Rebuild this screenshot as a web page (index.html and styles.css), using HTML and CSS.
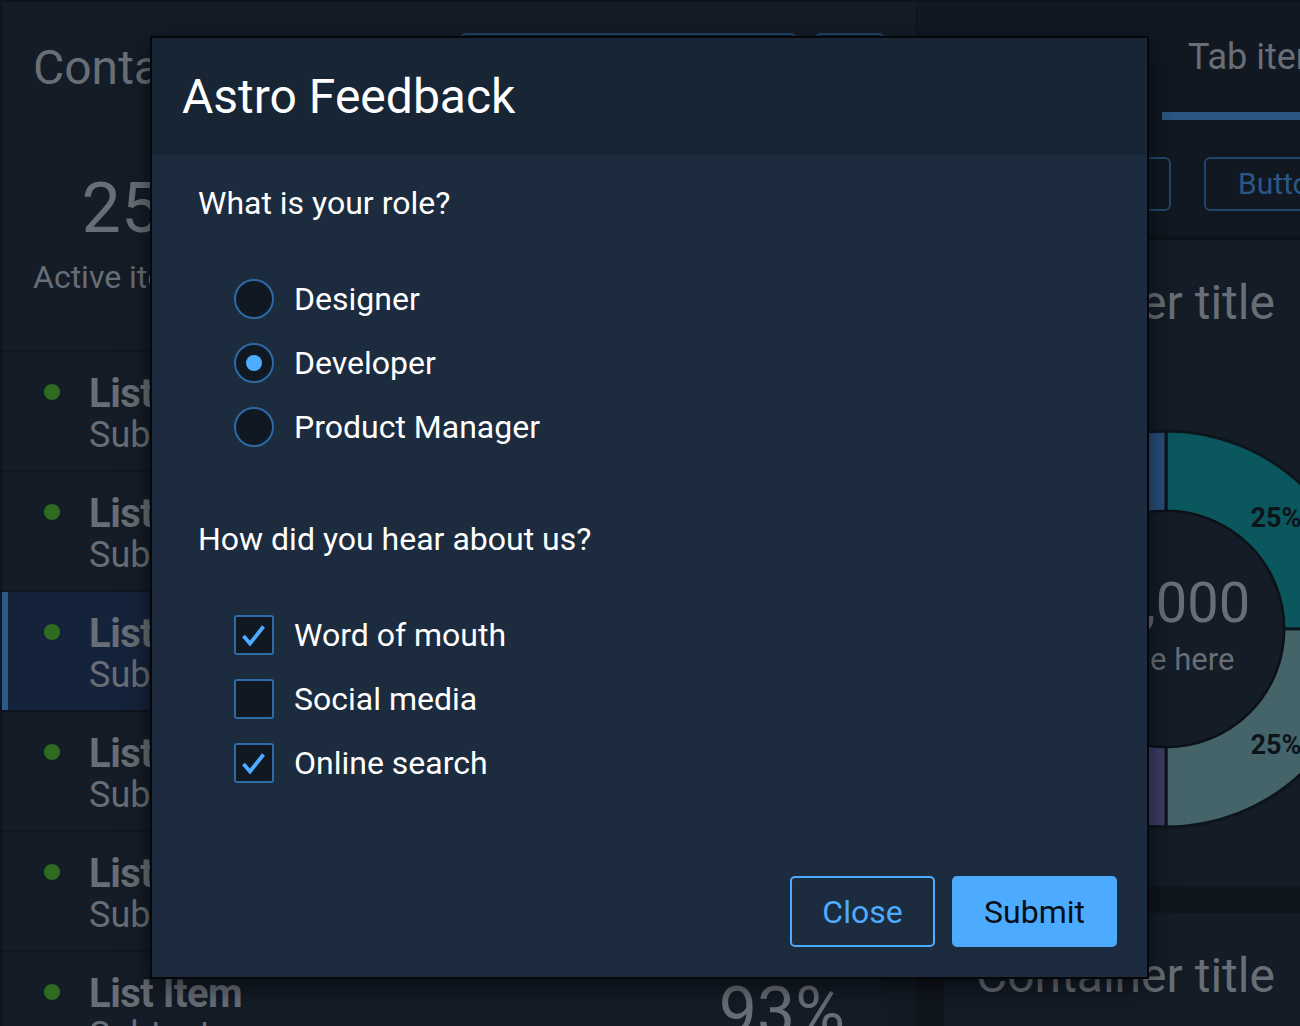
FILE: index.html
```html
<!DOCTYPE html>
<html lang="en">
<head>
<meta charset="utf-8">
<title>Astro Feedback</title>
<link rel="stylesheet" href="styles.css">
</head>
<body>
<div class="app">
  <section class="left">
    <header class="lhead">
      <div class="lhead-top">
        <h2 class="ctitle">Container title</h2>
        <div class="lactions">
          <span class="obtn obtn-wide">Button</span>
          <span class="obtn obtn-small">B</span>
        </div>
      </div>
      <div class="stat">
        <div class="stat-num">25</div>
        <div class="stat-label">Active items</div>
      </div>
    </header>
    <div class="listwrap">
      <ul class="list">
        <li class="item"><span class="dot"></span><div class="itext"><div class="ititle">List Item</div><div class="isub">Subtext</div></div><div class="ival">93%</div></li>
        <li class="item"><span class="dot"></span><div class="itext"><div class="ititle">List Item</div><div class="isub">Subtext</div></div><div class="ival">93%</div></li>
        <li class="item item-selected"><span class="dot"></span><div class="itext"><div class="ititle">List Item</div><div class="isub">Subtext</div></div><div class="ival">93%</div></li>
        <li class="item"><span class="dot"></span><div class="itext"><div class="ititle">List Item</div><div class="isub">Subtext</div></div><div class="ival">93%</div></li>
        <li class="item"><span class="dot"></span><div class="itext"><div class="ititle">List Item</div><div class="isub">Subtext</div></div><div class="ival">93%</div></li>
        <li class="item"><span class="dot"></span><div class="itext"><div class="ititle">List Item</div><div class="isub">Subtext</div></div><div class="ival">93%</div></li>
      </ul>
      <div class="scrolltrack"></div>
    </div>
  </section>

  <section class="right">
    <nav class="tabs">
      <div class="tab">Tab item</div>
      <div class="tab tab-active">Tab item</div>
    </nav>
    <div class="toolbar">
      <span class="obtn tb-first">Button</span>
      <span class="obtn tb-second">Button</span>
    </div>
    <div class="cards">
      <div class="card card-chart">
        <h2 class="ctitle card-title">Container title</h2>
        <svg class="donut" width="420" height="420" viewBox="0 0 420 420">
          <g stroke="#0e141b" stroke-width="3">
            <path d="M210,12 A198,198 0 0 1 408,210 L328,210 A118,118 0 0 0 210,92 Z" fill="#0b575e"/>
            <path d="M408,210 A198,198 0 0 1 210,408 L210,328 A118,118 0 0 0 328,210 Z" fill="#45646a"/>
            <path d="M210,408 A198,198 0 0 1 12,210 L92,210 A118,118 0 0 0 210,328 Z" fill="#3d3e65"/>
            <path d="M12,210 A198,198 0 0 1 210,12 L210,92 A118,118 0 0 0 92,210 Z" fill="#264f79"/>
          </g>
          <circle cx="210" cy="210" r="118" fill="#131c27" stroke="#0c1117" stroke-width="2"/>
          <text class="seg-label" x="320" y="108" text-anchor="middle">25%</text>
          <text class="seg-label" x="320" y="335" text-anchor="middle">25%</text>
          <text class="seg-label" x="100" y="335" text-anchor="middle">25%</text>
          <text class="seg-label" x="100" y="108" text-anchor="middle">25%</text>
          <text class="center-num" x="210" y="203" text-anchor="middle">10,000</text>
          <text class="center-label" x="206" y="251" text-anchor="middle">Value here</text>
        </svg>
      </div>
      <div class="card">
        <h2 class="ctitle card-title">Container title</h2>
      </div>
    </div>
  </section>
</div>

<div class="dialog" role="dialog" aria-labelledby="dlg-title">
  <div class="dlg-head">
    <h1 id="dlg-title" class="dlg-title">Astro Feedback</h1>
  </div>
  <div class="dlg-body">
    <div class="question">What is your role?</div>
    <div class="group">
      <label class="row"><span class="radio"></span><span class="rlabel">Designer</span></label>
      <label class="row"><span class="radio radio-on"></span><span class="rlabel">Developer</span></label>
      <label class="row"><span class="radio"></span><span class="rlabel">Product Manager</span></label>
    </div>
    <div class="question q2">How did you hear about us?</div>
    <div class="group">
      <label class="row"><span class="check check-on"><svg width="40" height="40" viewBox="0 0 40 40"><path d="M9.5 21 L16 28.5 L29.5 11.5" fill="none" stroke="#4dacff" stroke-width="3.8" stroke-linecap="butt" stroke-linejoin="miter"/></svg></span><span class="rlabel">Word of mouth</span></label>
      <label class="row"><span class="check"></span><span class="rlabel">Social media</span></label>
      <label class="row"><span class="check check-on"><svg width="40" height="40" viewBox="0 0 40 40"><path d="M9.5 21 L16 28.5 L29.5 11.5" fill="none" stroke="#4dacff" stroke-width="3.8" stroke-linecap="butt" stroke-linejoin="miter"/></svg></span><span class="rlabel">Online search</span></label>
    </div>
    <div class="dlg-foot">
      <button class="btn btn-secondary">Close</button>
      <button class="btn btn-primary">Submit</button>
    </div>
  </div>
</div>
</body>
</html>
```

FILE: styles.css
```css
html, body {
  margin: 0;
  padding: 0;
  width: 1300px;
  height: 1026px;
  overflow: hidden;
  background: #0e141b;
  font-family: Roboto, "Liberation Sans", sans-serif;
}

.app {
  display: flex;
  align-items: flex-start;
  padding: 2px 0 0 2px;
  width: 1600px;
}

/* ---------- left panel ---------- */
.left {
  width: 914px;
  flex: none;
  background: #141c27;
  display: flex;
  flex-direction: column;
}

.lhead {
  flex: none;
  height: 348px;
  box-sizing: border-box;
  padding: 31px 31px 0 31px;
  display: flex;
  flex-direction: column;
  align-items: flex-start;
}

.lhead-top {
  display: flex;
  align-self: stretch;
  justify-content: space-between;
  align-items: flex-start;
}

.ctitle {
  margin: 0;
  font-weight: 400;
  font-size: 48px;
  line-height: 56px;
  color: #686e76;
}

.lhead-top .ctitle { margin-top: 7px; }

.lactions {
  display: flex;
  gap: 18px;
}

.obtn {
  box-sizing: border-box;
  height: 54px;
  border: 2px solid #22466b;
  border-radius: 6px;
  color: #2a5785;
  font-size: 30px;
  line-height: 50px;
  padding: 0 32px;
  display: inline-block;
  flex: none;
}

.obtn-wide { width: 337px; }
.obtn-small { width: 70px; padding: 0; }

.stat {
  margin-top: 77px;
  display: flex;
  flex-direction: column;
  align-items: center;
  color: #686e76;
}

.stat-num {
  font-size: 70px;
  line-height: 70px;
}

.stat-label {
  margin-top: 14px;
  font-size: 32px;
  line-height: 40px;
}

.listwrap {
  flex: none;
  display: flex;
}

.list {
  list-style: none;
  margin: 0;
  padding: 0;
  width: 884px;
}

.scrolltrack {
  flex: 1;
  background: #121a24;
}

.item {
  height: 118px;
  border-top: 2px solid #0f161e;
  display: flex;
  align-items: flex-start;
  padding: 0 41px 0 42px;
}

.item-selected {
  background: #15233a;
  box-shadow: inset 6px 0 0 #2a5a8a;
}

.dot {
  width: 16px;
  height: 16px;
  border-radius: 50%;
  background: #2e6c1f;
  margin-top: 32px;
  flex: none;
}

.itext {
  margin-left: 29px;
  padding-top: 21px;
  flex: 1;
  color: #686e76;
}

.ititle {
  font-weight: 700;
  font-size: 40px;
  line-height: 42px;
  letter-spacing: -0.5px;
}

.isub {
  font-size: 36px;
  line-height: 40px;
}

.ival {
  margin-top: 26px;
  font-size: 68px;
  line-height: 68px;
  color: #686e76;
}

/* ---------- right side ---------- */
.right {
  width: 660px;
  flex: none;
  margin-left: 1px;
  display: flex;
  flex-direction: column;
  background: #10161e;
}

.tabs {
  flex: none;
  display: flex;
  height: 118px;
  background: #111822;
}

.tab {
  box-sizing: border-box;
  height: 118px;
  padding: 0 26px 8px 26px;
  display: flex;
  align-items: center;
  font-size: 36px;
  color: #686e76;
}

.tab:first-child { width: 245px; }

.tab-active {
  padding-bottom: 0;
  border-bottom: 8px solid #2b5783;
}

.toolbar {
  flex: none;
  height: 120px;
  box-sizing: border-box;
  padding: 37px 0 0 54px;
  display: flex;
  align-items: flex-start;
  gap: 33px;
  background: #111822;
  border-bottom: 4px solid #0d131a;
}

.tb-first { width: 200px; }
.tb-second { width: 200px; }

.cards {
  flex: none;
  padding-left: 27px;
  display: flex;
  flex-direction: column;
  gap: 27px;
}

.card {
  flex: none;
  background: #131c27;
  padding: 35px 32px 0 32px;
  box-sizing: border-box;
  height: 200px;
}

.card-chart {
  height: 646px;
}

.donut {
  display: block;
  margin: 88px 0 0 -20px;
}

.seg-label {
  font-family: Roboto, "Liberation Sans", sans-serif;
  font-weight: 700;
  font-size: 27px;
  fill: #0e141b;
}

.center-num {
  font-family: Roboto, "Liberation Sans", sans-serif;
  font-size: 56px;
  fill: #686e76;
}

.center-label {
  font-family: Roboto, "Liberation Sans", sans-serif;
  font-size: 31px;
  fill: #686e76;
}

/* ---------- dialog ---------- */
.dialog {
  position: absolute;
  left: 150px;
  top: 36px;
  width: 999px;
  height: 943px;
  box-sizing: border-box;
  border: 2px solid #05080b;
  background: #1c2b3e;
  display: flex;
  flex-direction: column;
  box-shadow: 0 8px 24px rgba(0, 0, 0, 0.55);
}

.dlg-head {
  height: 117px;
  flex: none;
  background: #182534;
  display: flex;
  align-items: center;
  padding-left: 30px;
}

.dlg-title {
  margin: 0;
  font-size: 48px;
  line-height: 48px;
  font-weight: 400;
  color: #ffffff;
}

.dlg-body {
  flex: 1;
  display: flex;
  flex-direction: column;
  padding: 28px 30px 30px 46px;
  color: #ffffff;
}

.question {
  font-size: 32px;
  line-height: 40px;
  margin-bottom: 44px;
}

.q2 { margin-top: 60px; }

.group {
  display: flex;
  flex-direction: column;
  padding-left: 36px;
}

.row {
  height: 64px;
  display: flex;
  align-items: center;
  gap: 20px;
  font-size: 32px;
}

.radio {
  box-sizing: border-box;
  width: 40px;
  height: 40px;
  border-radius: 50%;
  border: 2px solid #2e6aa5;
  background: #101822;
  display: flex;
  align-items: center;
  justify-content: center;
  flex: none;
}

.radio-on::after {
  content: "";
  width: 16px;
  height: 16px;
  border-radius: 50%;
  background: #4dacff;
}

.check {
  box-sizing: border-box;
  width: 40px;
  height: 40px;
  border-radius: 3px;
  border: 2px solid #2e6aa5;
  background: #101822;
  flex: none;
  position: relative;
}

.check svg {
  position: absolute;
  left: -2px;
  top: -2px;
}

.dlg-foot {
  margin-top: auto;
  display: flex;
  justify-content: flex-end;
  gap: 17px;
}

.btn {
  height: 71px;
  box-sizing: border-box;
  border-radius: 5px;
  font-family: Roboto, "Liberation Sans", sans-serif;
  font-size: 32px;
  padding: 0;
  cursor: pointer;
}

.btn-secondary {
  width: 145px;
  background: transparent;
  border: 2px solid #4dacff;
  color: #4dacff;
}

.btn-primary {
  width: 165px;
  background: #4dabff;
  border: 2px solid #4dabff;
  color: #0a0f15;
}
```
